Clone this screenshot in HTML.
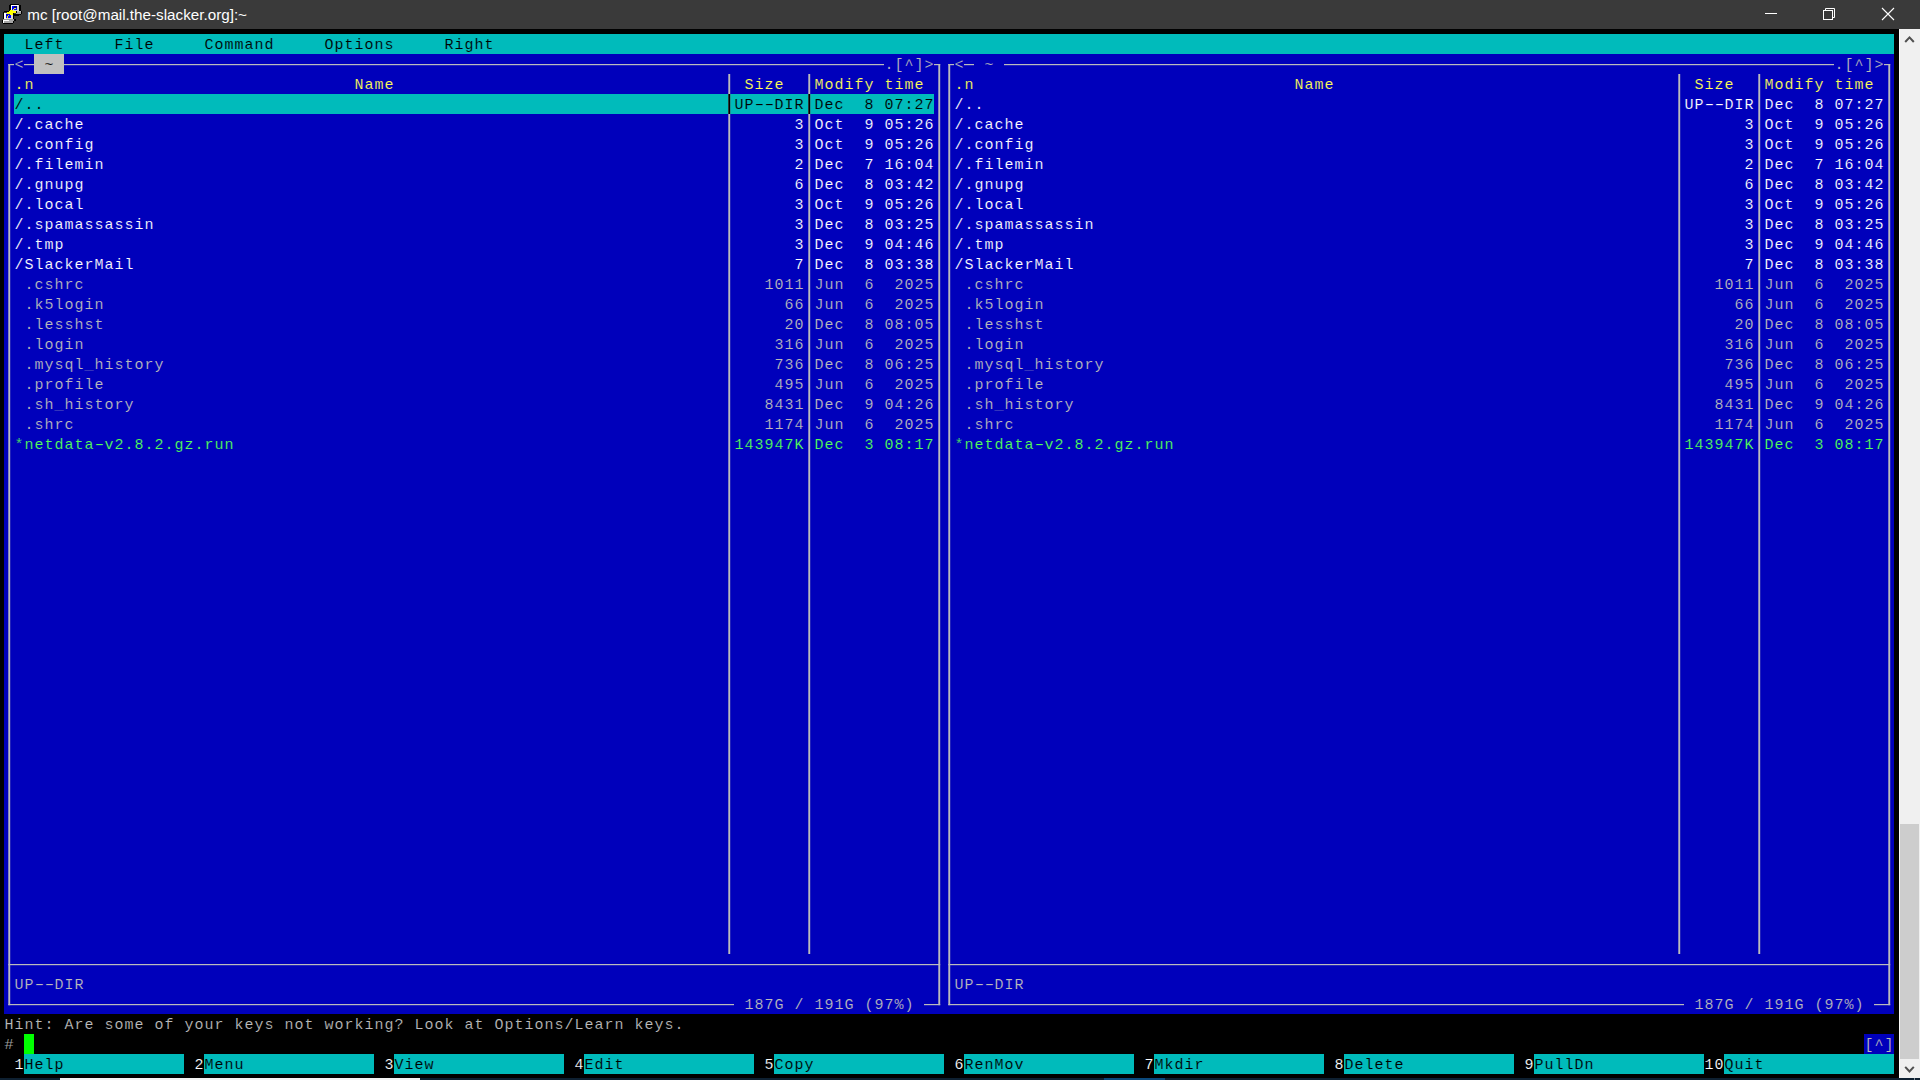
<!DOCTYPE html>
<html lang="en"><head><meta charset="utf-8">
<title>mc [root@mail.the-slacker.org]:~</title>
<style>
html,body{margin:0;padding:0;background:#000;overflow:hidden}
body{width:1920px;height:1080px;position:relative;font-family:"Liberation Sans",sans-serif}
#titlebar{position:absolute;left:0;top:0;width:1920px;height:29px;background:#3a3a3a}
#title{position:absolute;left:27.3px;top:0;height:29px;line-height:29px;color:#fff;font-size:15.22px;white-space:pre}
#term{position:absolute;left:0;top:0;width:1920px;height:1080px;font-family:"Liberation Mono",monospace;font-size:15.000px;letter-spacing:1.000px}
.t i{display:inline-block;font-style:normal;transform:scaleX(1.65);transform-origin:4.5px 50%}
.b{position:absolute}
.t{position:absolute;height:20px;line-height:20px;white-space:pre;margin:0}
#sb{position:absolute;left:1899px;top:29px;width:21px;height:1049px;background:#f0f0f0;box-shadow:inset 1px 0 0 #fbfbfb}
#thumb{position:absolute;left:1px;top:795px;width:19px;height:235px;background:#cdcdcd}
#task{position:absolute;left:0;top:1078px;width:1920px;height:2px;background:#0e2031}
svg{position:absolute;left:0;top:0}
</style></head><body>
<div id="titlebar"><div id="title">mc [root@mail.the-slacker.org]:~</div></div>
<svg width="30" height="29" viewBox="0 0 30 29" shape-rendering="crispEdges">
<!-- upper computer -->
<rect x="10" y="4" width="9" height="1" fill="#000"/>
<rect x="9" y="5" width="2" height="6" fill="#000"/>
<rect x="19" y="5" width="2" height="7" fill="#000"/>
<rect x="11" y="5" width="8" height="6" fill="#d8d8d8"/>
<rect x="11" y="5" width="7" height="1" fill="#fff"/>
<rect x="11" y="5" width="1" height="5" fill="#fff"/>
<rect x="12" y="6" width="5" height="4" fill="#0000ff"/>
<rect x="14" y="6" width="3" height="2" fill="#000090"/>
<rect x="16" y="11" width="5" height="3" fill="#a0a0a0"/>
<rect x="17" y="11" width="4" height="1" fill="#c0c0c0"/>
<rect x="21" y="11" width="1" height="3" fill="#000"/>
<rect x="14" y="14" width="7" height="1" fill="#000"/>
<rect x="19" y="14" width="2" height="1" fill="#000"/>
<rect x="14" y="15" width="5" height="1" fill="#000"/>
<!-- lower computer -->
<rect x="4" y="11" width="6" height="1" fill="#000"/>
<rect x="3" y="12" width="1" height="8" fill="#000"/>
<rect x="13" y="13" width="1" height="6" fill="#000"/>
<rect x="4" y="13" width="9" height="6" fill="#d8d8d8"/>
<rect x="4" y="13" width="2" height="6" fill="#fff"/>
<rect x="6" y="14" width="5" height="4" fill="#0000ff"/>
<rect x="6" y="14" width="2" height="2" fill="#0000c0"/>
<rect x="2" y="20" width="1" height="3" fill="#000"/>
<rect x="3" y="19" width="11" height="1" fill="#9a9a9a"/>
<rect x="3" y="20" width="11" height="3" fill="#a8a8a8"/>
<rect x="3" y="20" width="6" height="1" fill="#fff"/>
<rect x="3" y="20" width="1" height="3" fill="#fff"/>
<rect x="14" y="19" width="2" height="2" fill="#000"/>
<rect x="13" y="21" width="1" height="2" fill="#000"/>
<rect x="3" y="23" width="10" height="1" fill="#000"/>
<!-- lightning -->
<rect x="9" y="11" width="7" height="2" fill="#ffff00"/>
<rect x="7" y="12" width="6" height="2" fill="#ffff00"/>
<rect x="10" y="10" width="3" height="5" fill="#ffff00"/>
<rect x="13" y="9" width="1" height="1" fill="#ffff00"/>
<rect x="14" y="8" width="2" height="1" fill="#ffff00"/>
<rect x="8" y="15" width="1" height="1" fill="#ffff00"/>
<rect x="7" y="16" width="1" height="2" fill="#ffff00"/>
<rect x="16" y="11" width="1" height="2" fill="#000"/>
</svg>
<svg width="1920" height="29" viewBox="0 0 1920 29" style="pointer-events:none">
<rect x="1765" y="13" width="12" height="1" fill="#fff"/>
<g fill="none" stroke="#fff" stroke-width="1">
<rect x="1823.5" y="10.5" width="9" height="9"/>
<path d="M1825.5 10.5 V8.5 H1834.5 V17.5 H1832.5"/>
<path d="M1882 8 L1894 20 M1894 8 L1882 20" stroke-width="1.1"/>
</g></svg>
<div id="term">
<div class="b" style="left:4px;top:54px;width:1890px;height:960px;background:#0000bb"></div>
<div class="b" style="left:4px;top:34px;width:1890px;height:20px;background:#00bbbb"></div>
<div class="b" style="left:34px;top:54px;width:30px;height:20px;background:#c0c0c0"></div>
<div class="b" style="left:14px;top:94px;width:920px;height:20px;background:#00bbbb"></div>
<div class="b" style="left:24px;top:1034px;width:10px;height:20px;background:#00ff00"></div>
<div class="b" style="left:1864px;top:1034px;width:30px;height:20px;background:#0000bb"></div>
<div class="b" style="left:24px;top:1054px;width:160px;height:20px;background:#00bbbb"></div>
<div class="b" style="left:204px;top:1054px;width:170px;height:20px;background:#00bbbb"></div>
<div class="b" style="left:394px;top:1054px;width:170px;height:20px;background:#00bbbb"></div>
<div class="b" style="left:584px;top:1054px;width:170px;height:20px;background:#00bbbb"></div>
<div class="b" style="left:774px;top:1054px;width:170px;height:20px;background:#00bbbb"></div>
<div class="b" style="left:964px;top:1054px;width:170px;height:20px;background:#00bbbb"></div>
<div class="b" style="left:1154px;top:1054px;width:170px;height:20px;background:#00bbbb"></div>
<div class="b" style="left:1344px;top:1054px;width:170px;height:20px;background:#00bbbb"></div>
<div class="b" style="left:1534px;top:1054px;width:170px;height:20px;background:#00bbbb"></div>
<div class="b" style="left:1724px;top:1054px;width:170px;height:20px;background:#00bbbb"></div>
<svg width="1920" height="1080" viewBox="0 0 1920 1080">
<rect x="8.30" y="64.00" width="5.70" height="1.20" fill="#bbbbbb"/>
<rect x="8.30" y="64.00" width="1.90" height="941.20" fill="#bbbbbb"/>
<rect x="24.00" y="64.00" width="10.00" height="1.20" fill="#bbbbbb"/>
<rect x="64.00" y="64.00" width="820.00" height="1.20" fill="#bbbbbb"/>
<rect x="934.00" y="64.00" width="6.20" height="1.20" fill="#bbbbbb"/>
<rect x="938.30" y="64.00" width="1.90" height="941.20" fill="#bbbbbb"/>
<rect x="728.30" y="74.00" width="1.90" height="880.00" fill="#bbbbbb"/>
<rect x="808.30" y="74.00" width="1.90" height="880.00" fill="#bbbbbb"/>
<rect x="728.30" y="94.00" width="1.90" height="20.00" fill="#000000"/>
<rect x="808.30" y="94.00" width="1.90" height="20.00" fill="#000000"/>
<rect x="8.30" y="964.00" width="931.90" height="1.20" fill="#bbbbbb"/>
<rect x="8.30" y="1004.00" width="725.70" height="1.20" fill="#bbbbbb"/>
<rect x="924.00" y="1004.00" width="16.20" height="1.20" fill="#bbbbbb"/>
<rect x="948.30" y="64.00" width="5.70" height="1.20" fill="#bbbbbb"/>
<rect x="948.30" y="64.00" width="1.90" height="941.20" fill="#bbbbbb"/>
<rect x="964.00" y="64.00" width="10.00" height="1.20" fill="#bbbbbb"/>
<rect x="1004.00" y="64.00" width="830.00" height="1.20" fill="#bbbbbb"/>
<rect x="1884.00" y="64.00" width="6.20" height="1.20" fill="#bbbbbb"/>
<rect x="1888.30" y="64.00" width="1.90" height="941.20" fill="#bbbbbb"/>
<rect x="1678.30" y="74.00" width="1.90" height="880.00" fill="#bbbbbb"/>
<rect x="1758.30" y="74.00" width="1.90" height="880.00" fill="#bbbbbb"/>
<rect x="948.30" y="964.00" width="941.90" height="1.20" fill="#bbbbbb"/>
<rect x="948.30" y="1004.00" width="735.70" height="1.20" fill="#bbbbbb"/>
<rect x="1874.00" y="1004.00" width="16.20" height="1.20" fill="#bbbbbb"/>
</svg>
<span class="t" style="left:24.5px;top:36px;color:#000000;-webkit-text-stroke:0.15px #00bbbb">Left</span>
<span class="t" style="left:114.5px;top:36px;color:#000000;-webkit-text-stroke:0.15px #00bbbb">File</span>
<span class="t" style="left:204.5px;top:36px;color:#000000;-webkit-text-stroke:0.15px #00bbbb">Command</span>
<span class="t" style="left:324.5px;top:36px;color:#000000;-webkit-text-stroke:0.15px #00bbbb">Options</span>
<span class="t" style="left:444.5px;top:36px;color:#000000;-webkit-text-stroke:0.15px #00bbbb">Right</span>
<span class="t" style="left:14.5px;top:56px;color:#bbbbbb;-webkit-text-stroke:0.15px #0000bb">&lt;</span>
<span class="t" style="left:44.5px;top:56px;color:#000000;-webkit-text-stroke:0.15px #c0c0c0">~</span>
<span class="t" style="left:884.5px;top:56px;color:#bbbbbb;-webkit-text-stroke:0.15px #0000bb">.[^]&gt;</span>
<span class="t" style="left:14.5px;top:76px;color:#ffff55;-webkit-text-stroke:0.15px #0000bb">.n</span>
<span class="t" style="left:354.5px;top:76px;color:#ffff55;-webkit-text-stroke:0.15px #0000bb">Name</span>
<span class="t" style="left:744.5px;top:76px;color:#ffff55;-webkit-text-stroke:0.15px #0000bb">Size</span>
<span class="t" style="left:814.5px;top:76px;color:#ffff55;-webkit-text-stroke:0.15px #0000bb">Modify time</span>
<span class="t" style="left:14.5px;top:96px;color:#000000;-webkit-text-stroke:0.15px #00bbbb">/..</span>
<span class="t" style="left:734.5px;top:96px;color:#000000;-webkit-text-stroke:0.15px #00bbbb">UP<i>-</i><i>-</i>DIR</span>
<span class="t" style="left:814.5px;top:96px;color:#000000;-webkit-text-stroke:0.15px #00bbbb">Dec  8 07:27</span>
<span class="t" style="left:14.5px;top:116px;color:#ffffff;-webkit-text-stroke:0.15px #0000bb">/.cache</span>
<span class="t" style="left:794.5px;top:116px;color:#ffffff;-webkit-text-stroke:0.15px #0000bb">3</span>
<span class="t" style="left:814.5px;top:116px;color:#ffffff;-webkit-text-stroke:0.15px #0000bb">Oct  9 05:26</span>
<span class="t" style="left:14.5px;top:136px;color:#ffffff;-webkit-text-stroke:0.15px #0000bb">/.config</span>
<span class="t" style="left:794.5px;top:136px;color:#ffffff;-webkit-text-stroke:0.15px #0000bb">3</span>
<span class="t" style="left:814.5px;top:136px;color:#ffffff;-webkit-text-stroke:0.15px #0000bb">Oct  9 05:26</span>
<span class="t" style="left:14.5px;top:156px;color:#ffffff;-webkit-text-stroke:0.15px #0000bb">/.filemin</span>
<span class="t" style="left:794.5px;top:156px;color:#ffffff;-webkit-text-stroke:0.15px #0000bb">2</span>
<span class="t" style="left:814.5px;top:156px;color:#ffffff;-webkit-text-stroke:0.15px #0000bb">Dec  7 16:04</span>
<span class="t" style="left:14.5px;top:176px;color:#ffffff;-webkit-text-stroke:0.15px #0000bb">/.gnupg</span>
<span class="t" style="left:794.5px;top:176px;color:#ffffff;-webkit-text-stroke:0.15px #0000bb">6</span>
<span class="t" style="left:814.5px;top:176px;color:#ffffff;-webkit-text-stroke:0.15px #0000bb">Dec  8 03:42</span>
<span class="t" style="left:14.5px;top:196px;color:#ffffff;-webkit-text-stroke:0.15px #0000bb">/.local</span>
<span class="t" style="left:794.5px;top:196px;color:#ffffff;-webkit-text-stroke:0.15px #0000bb">3</span>
<span class="t" style="left:814.5px;top:196px;color:#ffffff;-webkit-text-stroke:0.15px #0000bb">Oct  9 05:26</span>
<span class="t" style="left:14.5px;top:216px;color:#ffffff;-webkit-text-stroke:0.15px #0000bb">/.spamassassin</span>
<span class="t" style="left:794.5px;top:216px;color:#ffffff;-webkit-text-stroke:0.15px #0000bb">3</span>
<span class="t" style="left:814.5px;top:216px;color:#ffffff;-webkit-text-stroke:0.15px #0000bb">Dec  8 03:25</span>
<span class="t" style="left:14.5px;top:236px;color:#ffffff;-webkit-text-stroke:0.15px #0000bb">/.tmp</span>
<span class="t" style="left:794.5px;top:236px;color:#ffffff;-webkit-text-stroke:0.15px #0000bb">3</span>
<span class="t" style="left:814.5px;top:236px;color:#ffffff;-webkit-text-stroke:0.15px #0000bb">Dec  9 04:46</span>
<span class="t" style="left:14.5px;top:256px;color:#ffffff;-webkit-text-stroke:0.15px #0000bb">/SlackerMail</span>
<span class="t" style="left:794.5px;top:256px;color:#ffffff;-webkit-text-stroke:0.15px #0000bb">7</span>
<span class="t" style="left:814.5px;top:256px;color:#ffffff;-webkit-text-stroke:0.15px #0000bb">Dec  8 03:38</span>
<span class="t" style="left:14.5px;top:276px;color:#bbbbbb;-webkit-text-stroke:0.15px #0000bb"> .cshrc</span>
<span class="t" style="left:764.5px;top:276px;color:#bbbbbb;-webkit-text-stroke:0.15px #0000bb">1011</span>
<span class="t" style="left:814.5px;top:276px;color:#bbbbbb;-webkit-text-stroke:0.15px #0000bb">Jun  6  2025</span>
<span class="t" style="left:14.5px;top:296px;color:#bbbbbb;-webkit-text-stroke:0.15px #0000bb"> .k5login</span>
<span class="t" style="left:784.5px;top:296px;color:#bbbbbb;-webkit-text-stroke:0.15px #0000bb">66</span>
<span class="t" style="left:814.5px;top:296px;color:#bbbbbb;-webkit-text-stroke:0.15px #0000bb">Jun  6  2025</span>
<span class="t" style="left:14.5px;top:316px;color:#bbbbbb;-webkit-text-stroke:0.15px #0000bb"> .lesshst</span>
<span class="t" style="left:784.5px;top:316px;color:#bbbbbb;-webkit-text-stroke:0.15px #0000bb">20</span>
<span class="t" style="left:814.5px;top:316px;color:#bbbbbb;-webkit-text-stroke:0.15px #0000bb">Dec  8 08:05</span>
<span class="t" style="left:14.5px;top:336px;color:#bbbbbb;-webkit-text-stroke:0.15px #0000bb"> .login</span>
<span class="t" style="left:774.5px;top:336px;color:#bbbbbb;-webkit-text-stroke:0.15px #0000bb">316</span>
<span class="t" style="left:814.5px;top:336px;color:#bbbbbb;-webkit-text-stroke:0.15px #0000bb">Jun  6  2025</span>
<span class="t" style="left:14.5px;top:356px;color:#bbbbbb;-webkit-text-stroke:0.15px #0000bb"> .mysql_history</span>
<span class="t" style="left:774.5px;top:356px;color:#bbbbbb;-webkit-text-stroke:0.15px #0000bb">736</span>
<span class="t" style="left:814.5px;top:356px;color:#bbbbbb;-webkit-text-stroke:0.15px #0000bb">Dec  8 06:25</span>
<span class="t" style="left:14.5px;top:376px;color:#bbbbbb;-webkit-text-stroke:0.15px #0000bb"> .profile</span>
<span class="t" style="left:774.5px;top:376px;color:#bbbbbb;-webkit-text-stroke:0.15px #0000bb">495</span>
<span class="t" style="left:814.5px;top:376px;color:#bbbbbb;-webkit-text-stroke:0.15px #0000bb">Jun  6  2025</span>
<span class="t" style="left:14.5px;top:396px;color:#bbbbbb;-webkit-text-stroke:0.15px #0000bb"> .sh_history</span>
<span class="t" style="left:764.5px;top:396px;color:#bbbbbb;-webkit-text-stroke:0.15px #0000bb">8431</span>
<span class="t" style="left:814.5px;top:396px;color:#bbbbbb;-webkit-text-stroke:0.15px #0000bb">Dec  9 04:26</span>
<span class="t" style="left:14.5px;top:416px;color:#bbbbbb;-webkit-text-stroke:0.15px #0000bb"> .shrc</span>
<span class="t" style="left:764.5px;top:416px;color:#bbbbbb;-webkit-text-stroke:0.15px #0000bb">1174</span>
<span class="t" style="left:814.5px;top:416px;color:#bbbbbb;-webkit-text-stroke:0.15px #0000bb">Jun  6  2025</span>
<span class="t" style="left:14.5px;top:436px;color:#55ff55;-webkit-text-stroke:0.15px #0000bb">*netdata<i>-</i>v2.8.2.gz.run</span>
<span class="t" style="left:734.5px;top:436px;color:#55ff55;-webkit-text-stroke:0.15px #0000bb">143947K</span>
<span class="t" style="left:814.5px;top:436px;color:#55ff55;-webkit-text-stroke:0.15px #0000bb">Dec  3 08:17</span>
<span class="t" style="left:14.5px;top:976px;color:#bbbbbb;-webkit-text-stroke:0.15px #0000bb">UP<i>-</i><i>-</i>DIR</span>
<span class="t" style="left:744.5px;top:996px;color:#bbbbbb;-webkit-text-stroke:0.15px #0000bb">187G / 191G (97%)</span>
<span class="t" style="left:954.5px;top:56px;color:#bbbbbb;-webkit-text-stroke:0.15px #0000bb">&lt;</span>
<span class="t" style="left:984.5px;top:56px;color:#bbbbbb;-webkit-text-stroke:0.15px #0000bb">~</span>
<span class="t" style="left:1834.5px;top:56px;color:#bbbbbb;-webkit-text-stroke:0.15px #0000bb">.[^]&gt;</span>
<span class="t" style="left:954.5px;top:76px;color:#ffff55;-webkit-text-stroke:0.15px #0000bb">.n</span>
<span class="t" style="left:1294.5px;top:76px;color:#ffff55;-webkit-text-stroke:0.15px #0000bb">Name</span>
<span class="t" style="left:1694.5px;top:76px;color:#ffff55;-webkit-text-stroke:0.15px #0000bb">Size</span>
<span class="t" style="left:1764.5px;top:76px;color:#ffff55;-webkit-text-stroke:0.15px #0000bb">Modify time</span>
<span class="t" style="left:954.5px;top:96px;color:#ffffff;-webkit-text-stroke:0.15px #0000bb">/..</span>
<span class="t" style="left:1684.5px;top:96px;color:#ffffff;-webkit-text-stroke:0.15px #0000bb">UP<i>-</i><i>-</i>DIR</span>
<span class="t" style="left:1764.5px;top:96px;color:#ffffff;-webkit-text-stroke:0.15px #0000bb">Dec  8 07:27</span>
<span class="t" style="left:954.5px;top:116px;color:#ffffff;-webkit-text-stroke:0.15px #0000bb">/.cache</span>
<span class="t" style="left:1744.5px;top:116px;color:#ffffff;-webkit-text-stroke:0.15px #0000bb">3</span>
<span class="t" style="left:1764.5px;top:116px;color:#ffffff;-webkit-text-stroke:0.15px #0000bb">Oct  9 05:26</span>
<span class="t" style="left:954.5px;top:136px;color:#ffffff;-webkit-text-stroke:0.15px #0000bb">/.config</span>
<span class="t" style="left:1744.5px;top:136px;color:#ffffff;-webkit-text-stroke:0.15px #0000bb">3</span>
<span class="t" style="left:1764.5px;top:136px;color:#ffffff;-webkit-text-stroke:0.15px #0000bb">Oct  9 05:26</span>
<span class="t" style="left:954.5px;top:156px;color:#ffffff;-webkit-text-stroke:0.15px #0000bb">/.filemin</span>
<span class="t" style="left:1744.5px;top:156px;color:#ffffff;-webkit-text-stroke:0.15px #0000bb">2</span>
<span class="t" style="left:1764.5px;top:156px;color:#ffffff;-webkit-text-stroke:0.15px #0000bb">Dec  7 16:04</span>
<span class="t" style="left:954.5px;top:176px;color:#ffffff;-webkit-text-stroke:0.15px #0000bb">/.gnupg</span>
<span class="t" style="left:1744.5px;top:176px;color:#ffffff;-webkit-text-stroke:0.15px #0000bb">6</span>
<span class="t" style="left:1764.5px;top:176px;color:#ffffff;-webkit-text-stroke:0.15px #0000bb">Dec  8 03:42</span>
<span class="t" style="left:954.5px;top:196px;color:#ffffff;-webkit-text-stroke:0.15px #0000bb">/.local</span>
<span class="t" style="left:1744.5px;top:196px;color:#ffffff;-webkit-text-stroke:0.15px #0000bb">3</span>
<span class="t" style="left:1764.5px;top:196px;color:#ffffff;-webkit-text-stroke:0.15px #0000bb">Oct  9 05:26</span>
<span class="t" style="left:954.5px;top:216px;color:#ffffff;-webkit-text-stroke:0.15px #0000bb">/.spamassassin</span>
<span class="t" style="left:1744.5px;top:216px;color:#ffffff;-webkit-text-stroke:0.15px #0000bb">3</span>
<span class="t" style="left:1764.5px;top:216px;color:#ffffff;-webkit-text-stroke:0.15px #0000bb">Dec  8 03:25</span>
<span class="t" style="left:954.5px;top:236px;color:#ffffff;-webkit-text-stroke:0.15px #0000bb">/.tmp</span>
<span class="t" style="left:1744.5px;top:236px;color:#ffffff;-webkit-text-stroke:0.15px #0000bb">3</span>
<span class="t" style="left:1764.5px;top:236px;color:#ffffff;-webkit-text-stroke:0.15px #0000bb">Dec  9 04:46</span>
<span class="t" style="left:954.5px;top:256px;color:#ffffff;-webkit-text-stroke:0.15px #0000bb">/SlackerMail</span>
<span class="t" style="left:1744.5px;top:256px;color:#ffffff;-webkit-text-stroke:0.15px #0000bb">7</span>
<span class="t" style="left:1764.5px;top:256px;color:#ffffff;-webkit-text-stroke:0.15px #0000bb">Dec  8 03:38</span>
<span class="t" style="left:954.5px;top:276px;color:#bbbbbb;-webkit-text-stroke:0.15px #0000bb"> .cshrc</span>
<span class="t" style="left:1714.5px;top:276px;color:#bbbbbb;-webkit-text-stroke:0.15px #0000bb">1011</span>
<span class="t" style="left:1764.5px;top:276px;color:#bbbbbb;-webkit-text-stroke:0.15px #0000bb">Jun  6  2025</span>
<span class="t" style="left:954.5px;top:296px;color:#bbbbbb;-webkit-text-stroke:0.15px #0000bb"> .k5login</span>
<span class="t" style="left:1734.5px;top:296px;color:#bbbbbb;-webkit-text-stroke:0.15px #0000bb">66</span>
<span class="t" style="left:1764.5px;top:296px;color:#bbbbbb;-webkit-text-stroke:0.15px #0000bb">Jun  6  2025</span>
<span class="t" style="left:954.5px;top:316px;color:#bbbbbb;-webkit-text-stroke:0.15px #0000bb"> .lesshst</span>
<span class="t" style="left:1734.5px;top:316px;color:#bbbbbb;-webkit-text-stroke:0.15px #0000bb">20</span>
<span class="t" style="left:1764.5px;top:316px;color:#bbbbbb;-webkit-text-stroke:0.15px #0000bb">Dec  8 08:05</span>
<span class="t" style="left:954.5px;top:336px;color:#bbbbbb;-webkit-text-stroke:0.15px #0000bb"> .login</span>
<span class="t" style="left:1724.5px;top:336px;color:#bbbbbb;-webkit-text-stroke:0.15px #0000bb">316</span>
<span class="t" style="left:1764.5px;top:336px;color:#bbbbbb;-webkit-text-stroke:0.15px #0000bb">Jun  6  2025</span>
<span class="t" style="left:954.5px;top:356px;color:#bbbbbb;-webkit-text-stroke:0.15px #0000bb"> .mysql_history</span>
<span class="t" style="left:1724.5px;top:356px;color:#bbbbbb;-webkit-text-stroke:0.15px #0000bb">736</span>
<span class="t" style="left:1764.5px;top:356px;color:#bbbbbb;-webkit-text-stroke:0.15px #0000bb">Dec  8 06:25</span>
<span class="t" style="left:954.5px;top:376px;color:#bbbbbb;-webkit-text-stroke:0.15px #0000bb"> .profile</span>
<span class="t" style="left:1724.5px;top:376px;color:#bbbbbb;-webkit-text-stroke:0.15px #0000bb">495</span>
<span class="t" style="left:1764.5px;top:376px;color:#bbbbbb;-webkit-text-stroke:0.15px #0000bb">Jun  6  2025</span>
<span class="t" style="left:954.5px;top:396px;color:#bbbbbb;-webkit-text-stroke:0.15px #0000bb"> .sh_history</span>
<span class="t" style="left:1714.5px;top:396px;color:#bbbbbb;-webkit-text-stroke:0.15px #0000bb">8431</span>
<span class="t" style="left:1764.5px;top:396px;color:#bbbbbb;-webkit-text-stroke:0.15px #0000bb">Dec  9 04:26</span>
<span class="t" style="left:954.5px;top:416px;color:#bbbbbb;-webkit-text-stroke:0.15px #0000bb"> .shrc</span>
<span class="t" style="left:1714.5px;top:416px;color:#bbbbbb;-webkit-text-stroke:0.15px #0000bb">1174</span>
<span class="t" style="left:1764.5px;top:416px;color:#bbbbbb;-webkit-text-stroke:0.15px #0000bb">Jun  6  2025</span>
<span class="t" style="left:954.5px;top:436px;color:#55ff55;-webkit-text-stroke:0.15px #0000bb">*netdata<i>-</i>v2.8.2.gz.run</span>
<span class="t" style="left:1684.5px;top:436px;color:#55ff55;-webkit-text-stroke:0.15px #0000bb">143947K</span>
<span class="t" style="left:1764.5px;top:436px;color:#55ff55;-webkit-text-stroke:0.15px #0000bb">Dec  3 08:17</span>
<span class="t" style="left:954.5px;top:976px;color:#bbbbbb;-webkit-text-stroke:0.15px #0000bb">UP<i>-</i><i>-</i>DIR</span>
<span class="t" style="left:1694.5px;top:996px;color:#bbbbbb;-webkit-text-stroke:0.15px #0000bb">187G / 191G (97%)</span>
<span class="t" style="left:4.5px;top:1016px;color:#bbbbbb;-webkit-text-stroke:0.15px #000000">Hint: Are some of your keys not working? Look at Options/Learn keys.</span>
<span class="t" style="left:4.5px;top:1036px;color:#bbbbbb;-webkit-text-stroke:0.15px #000000">#</span>
<span class="t" style="left:1864.5px;top:1036px;color:#bbbbbb;-webkit-text-stroke:0.15px #0000bb">[^]</span>
<span class="t" style="left:4.5px;top:1056px;color:#ffffff;-webkit-text-stroke:0.15px #000000"> 1</span>
<span class="t" style="left:24.5px;top:1056px;color:#000000;-webkit-text-stroke:0.15px #00bbbb">Help</span>
<span class="t" style="left:184.5px;top:1056px;color:#ffffff;-webkit-text-stroke:0.15px #000000"> 2</span>
<span class="t" style="left:204.5px;top:1056px;color:#000000;-webkit-text-stroke:0.15px #00bbbb">Menu</span>
<span class="t" style="left:374.5px;top:1056px;color:#ffffff;-webkit-text-stroke:0.15px #000000"> 3</span>
<span class="t" style="left:394.5px;top:1056px;color:#000000;-webkit-text-stroke:0.15px #00bbbb">View</span>
<span class="t" style="left:564.5px;top:1056px;color:#ffffff;-webkit-text-stroke:0.15px #000000"> 4</span>
<span class="t" style="left:584.5px;top:1056px;color:#000000;-webkit-text-stroke:0.15px #00bbbb">Edit</span>
<span class="t" style="left:754.5px;top:1056px;color:#ffffff;-webkit-text-stroke:0.15px #000000"> 5</span>
<span class="t" style="left:774.5px;top:1056px;color:#000000;-webkit-text-stroke:0.15px #00bbbb">Copy</span>
<span class="t" style="left:944.5px;top:1056px;color:#ffffff;-webkit-text-stroke:0.15px #000000"> 6</span>
<span class="t" style="left:964.5px;top:1056px;color:#000000;-webkit-text-stroke:0.15px #00bbbb">RenMov</span>
<span class="t" style="left:1134.5px;top:1056px;color:#ffffff;-webkit-text-stroke:0.15px #000000"> 7</span>
<span class="t" style="left:1154.5px;top:1056px;color:#000000;-webkit-text-stroke:0.15px #00bbbb">Mkdir</span>
<span class="t" style="left:1324.5px;top:1056px;color:#ffffff;-webkit-text-stroke:0.15px #000000"> 8</span>
<span class="t" style="left:1344.5px;top:1056px;color:#000000;-webkit-text-stroke:0.15px #00bbbb">Delete</span>
<span class="t" style="left:1514.5px;top:1056px;color:#ffffff;-webkit-text-stroke:0.15px #000000"> 9</span>
<span class="t" style="left:1534.5px;top:1056px;color:#000000;-webkit-text-stroke:0.15px #00bbbb">PullDn</span>
<span class="t" style="left:1704.5px;top:1056px;color:#ffffff;-webkit-text-stroke:0.15px #000000">10</span>
<span class="t" style="left:1724.5px;top:1056px;color:#000000;-webkit-text-stroke:0.15px #00bbbb">Quit</span>
</div>
<div id="sb"><div id="thumb"></div><svg width="21" height="1049" viewBox="0 0 21 1049">
<path d="M6.2 13.0 L10.5 8.4 L14.8 13.0" fill="none" stroke="#505050" stroke-width="2"/>
<path d="M6.2 1037.9 L10.5 1042.5 L14.8 1037.9" fill="none" stroke="#505050" stroke-width="2"/>
</svg></div>
<div id="task"><div style="position:absolute;left:60px;top:0;width:360px;height:2px;background:#f4f4f4"></div><div style="position:absolute;left:1104px;top:0;width:61px;height:2px;background:#0b4a7d"></div><div style="position:absolute;left:1914px;top:0;width:1px;height:2px;background:#7f8c97"></div></div>
</body></html>
